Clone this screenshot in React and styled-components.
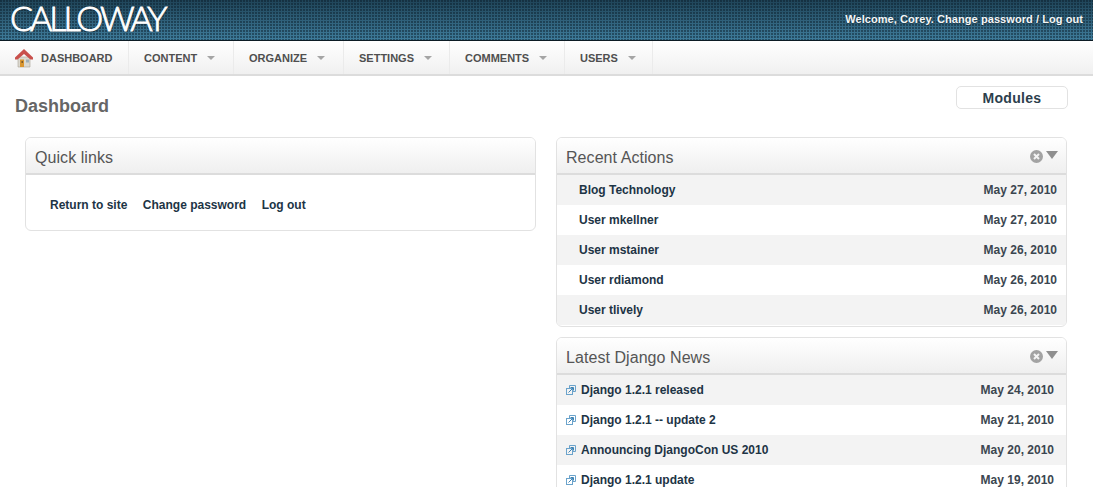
import React from 'react';
import styled, { createGlobalStyle } from 'styled-components';

const GlobalStyle = createGlobalStyle`
  html, body {
    margin: 0;
    padding: 0;
    height: 487px;
    overflow: hidden;
    background: #fff;
    font-family: "Liberation Sans", Arial, sans-serif;
  }
`;

const Header = styled.header`
  height: 41px;
  box-sizing: border-box;
  border-bottom: 1px solid #0d1c25;
  padding: 0 10px;
  display: flex;
  align-items: center;
  justify-content: space-between;
  background:
    radial-gradient(circle at 1px 1px, rgba(8, 26, 38, 0.45) 1px, transparent 1px) 0 0 / 3px 3px,
    linear-gradient(#1f4458, #3f7c9b);
`;

const Logo = styled.div`
  font-family: Lato, "Liberation Sans", sans-serif;
  font-weight: 300;
  font-size: 34px;
  line-height: 30px;
  letter-spacing: -3px;
  color: #fff;
  -webkit-text-stroke: 0.9px #fff;
  text-shadow: 0 1px 2px rgba(0, 0, 0, 0.5);
  padding-right: 4px;
  margin-top: -4px;
`;

const Welcome = styled.div`
  font-size: 11px;
  font-weight: bold;
  letter-spacing: 0.07px;
  color: #f4f6f7;
  text-shadow: 0 1px 1px rgba(0, 0, 0, 0.4);
  margin-top: -3px;
`;

const Nav = styled.nav`
  height: 35px;
  box-sizing: border-box;
  border-bottom: 2px solid #dcdcdc;
  background: linear-gradient(#fff, #f0f0f0);
  display: flex;
`;

const NavItem = styled.div`
  width: ${p => p.$width}px;
  box-sizing: border-box;
  padding-left: 15px;
  border-right: 1px solid #ebebeb;
  display: flex;
  align-items: center;
  font-size: 11px;
  font-weight: bold;
  color: #4f4f4f;
`;

const Caret = styled.span`
  width: 0;
  height: 0;
  border-left: 4px solid transparent;
  border-right: 4px solid transparent;
  border-top: 4px solid #a5a5a5;
  margin-left: 10px;
`;

const HomeIcon = styled.svg`
  width: 18px;
  height: 19px;
  margin: 2px 8px 0 0;
  flex: none;
`;

const TitleRow = styled.div`
  display: flex;
  justify-content: space-between;
  align-items: flex-start;
  padding: 10px 25px 0 15px;
  height: 61px;
  box-sizing: border-box;
`;

const Title = styled.h1`
  margin: 9px 0 0;
  font-size: 18px;
  line-height: 22px;
  font-weight: bold;
  color: #666;
`;

const ModulesButton = styled.button`
  width: 112px;
  height: 23px;
  border: 1px solid #e2e2e2;
  border-radius: 5px;
  background: #fff;
  padding: 0;
  font-family: inherit;
  font-size: 14px;
  font-weight: bold;
  letter-spacing: 0.3px;
  color: #2c3e4c;
`;

const Columns = styled.div`
  display: grid;
  grid-template-columns: 511px 511px;
  column-gap: 20px;
  padding-left: 25px;
  align-items: start;
`;

const Column = styled.div`
  display: flex;
  flex-direction: column;
  gap: 10px;
`;

const Panel = styled.section`
  border: 1px solid #e2e2e2;
  border-radius: 6px;
  overflow: hidden;
  background: #fff;
  padding-bottom: ${p => p.$bottom || 0}px;
`;

const PanelHead = styled.div`
  height: 37px;
  box-sizing: border-box;
  padding: 5px 9px 0;
  border-bottom: 2px solid #dcdcdc;
  background: linear-gradient(#fff, #efefef);
  display: flex;
  align-items: center;
  justify-content: space-between;
`;

const PanelTitle = styled.h2`
  margin: 0;
  font-size: 16px;
  font-weight: normal;
  letter-spacing: 0.06px;
  color: #555;
`;

const Controls = styled.div`
  display: flex;
  align-items: center;
  gap: 3px;
  margin: -4px -1px 0 0;
`;

const DownArrow = styled.span`
  width: 0;
  height: 0;
  border-left: 6px solid transparent;
  border-right: 6px solid transparent;
  border-top: 8px solid #8f8f8f;
  margin-top: -2px;
`;

const QuickBody = styled.div`
  height: 55px;
  box-sizing: border-box;
  padding: 4px 0 0 24px;
  display: flex;
  align-items: center;
  gap: 15.5px;
  font-size: 12px;
  font-weight: bold;
  color: #1d3445;
`;

const Row = styled.div`
  height: 30px;
  box-sizing: border-box;
  padding: 0 ${p => p.$right}px 0 ${p => p.$left}px;
  display: flex;
  align-items: center;
  font-size: 12px;
  font-weight: bold;
  color: #1d3445;
  background: ${p => (p.$odd ? '#f3f3f3' : '#fff')};
`;

const RowLabel = styled.span`
  flex: 1;
`;

const RowDate = styled.span`
  color: #3b4650;
`;

const LinkIcon = styled.svg`
  width: 10px;
  height: 10px;
  margin-right: 5px;
  flex: none;
`;

const navItems = [
  { label: 'CONTENT', width: 105 },
  { label: 'ORGANIZE', width: 110 },
  { label: 'SETTINGS', width: 106 },
  { label: 'COMMENTS', width: 115 },
  { label: 'USERS', width: 88 },
];

const actions = [
  ['Blog Technology', 'May 27, 2010'],
  ['User mkellner', 'May 27, 2010'],
  ['User mstainer', 'May 26, 2010'],
  ['User rdiamond', 'May 26, 2010'],
  ['User tlively', 'May 26, 2010'],
];

const news = [
  ['Django 1.2.1 released', 'May 24, 2010'],
  ['Django 1.2.1 -- update 2', 'May 21, 2010'],
  ['Announcing DjangoCon US 2010', 'May 20, 2010'],
  ['Django 1.2.1 update', 'May 19, 2010'],
];

function Home() {
  return (
    <HomeIcon viewBox="0 0 18 19">
      <path d="M3 8h12v10H3z" fill="#dcd9d0" stroke="#a9a396" strokeWidth=".6" />
      <path d="M9 0 18 8.5v2h-2.5L9 5 2.5 10.500H0v-2z" fill="#c9504c" />
      <path d="M5 10.500h4V18H5z" fill="#d9952f" />
      <path d="M6.500 12h1.500v2H6.500z" fill="#7a5a2a" />
      <path d="M11 10.500h3v3h-3z" fill="#9fb0bb" />
    </HomeIcon>
  );
}

function CloseIcon() {
  return (
    <svg width="13" height="13" viewBox="0 0 13 13">
      <circle cx="6.5" cy="6.5" r="6.5" fill="#a3a3a3" />
      <path d="M4 4l5 5M9 4l-5 5" stroke="#f4f4f4" strokeWidth="2" />
    </svg>
  );
}

function External() {
  return (
    <LinkIcon viewBox="0 0 10 10" fill="none" stroke="#6ba3cb" strokeWidth="1">
      <path d="M3.500 3V.5h6v6H7" />
      <rect x="0.5" y="3.5" width="6" height="6" />
      <path d="M2.500 7.500 7 3M4.500 2.500H7.500V5.500" stroke="#3f83b3" />
    </LinkIcon>
  );
}

function PanelControls() {
  return (
    <Controls>
      <CloseIcon />
      <DownArrow />
    </Controls>
  );
}

export default function App() {
  return (
    <>
      <GlobalStyle />
      <Header>
        <Logo>CALLOWAY</Logo>
        <Welcome>Welcome, Corey. Change password / Log out</Welcome>
      </Header>
      <Nav>
        <NavItem $width={129}>
          <Home />
          DASHBOARD
        </NavItem>
        {navItems.map(item => (
          <NavItem key={item.label} $width={item.width}>
            {item.label}
            <Caret />
          </NavItem>
        ))}
      </Nav>
      <TitleRow>
        <Title>Dashboard</Title>
        <ModulesButton>Modules</ModulesButton>
      </TitleRow>
      <Columns>
        <Column>
          <Panel>
            <PanelHead>
              <PanelTitle>Quick links</PanelTitle>
            </PanelHead>
            <QuickBody>
              <span>Return to site</span>
              <span>Change password</span>
              <span>Log out</span>
            </QuickBody>
          </Panel>
        </Column>
        <Column>
          <Panel $bottom={1}>
            <PanelHead>
              <PanelTitle>Recent Actions</PanelTitle>
              <PanelControls />
            </PanelHead>
            {actions.map(([label, date], i) => (
              <Row key={label} $odd={i % 2 === 0} $left={22} $right={9}>
                <RowLabel>{label}</RowLabel>
                <RowDate>{date}</RowDate>
              </Row>
            ))}
          </Panel>
          <Panel>
            <PanelHead>
              <PanelTitle>Latest Django News</PanelTitle>
              <PanelControls />
            </PanelHead>
            {news.map(([label, date], i) => (
              <Row key={label} $odd={i % 2 === 0} $left={9} $right={12}>
                <External />
                <RowLabel>{label}</RowLabel>
                <RowDate>{date}</RowDate>
              </Row>
            ))}
          </Panel>
        </Column>
      </Columns>
    </>
  );
}
